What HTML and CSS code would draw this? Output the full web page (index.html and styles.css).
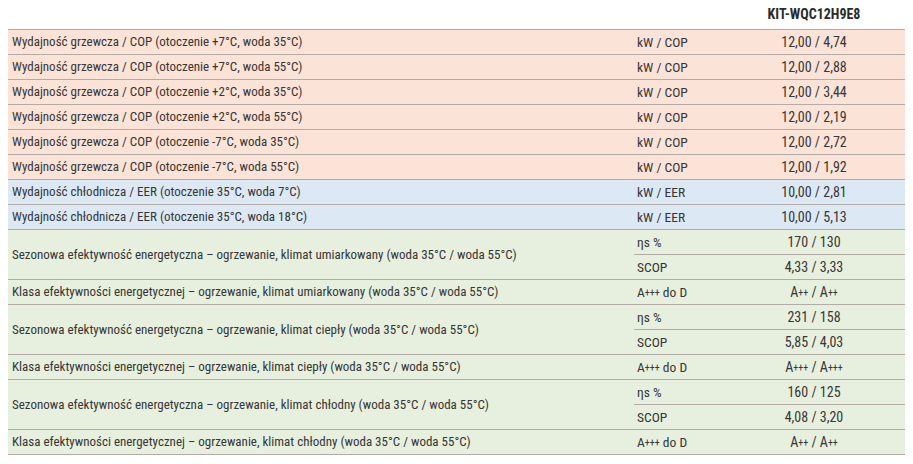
FILE: index.html
```html
<!DOCTYPE html>
<html lang="pl">
<head>
<meta charset="utf-8">
<title>KIT-WQC12H9E8</title>
<link rel="stylesheet" href="styles.css">
</head>
<body>
<table class="spec">
  <colgroup>
    <col class="c-desc">
    <col class="c-unit">
    <col class="c-val">
  </colgroup>
  <thead>
    <tr class="head">
      <th></th>
      <th></th>
      <th class="val">KIT-WQC12H9E8</th>
    </tr>
  </thead>
  <tbody>
    <tr class="heat"><td class="desc">Wydajność grzewcza / COP (otoczenie +7°C, woda 35°C)</td><td class="unit">kW / COP</td><td class="val">12,00 / 4,74</td></tr>
    <tr class="heat"><td class="desc">Wydajność grzewcza / COP (otoczenie +7°C, woda 55°C)</td><td class="unit">kW / COP</td><td class="val">12,00 / 2,88</td></tr>
    <tr class="heat"><td class="desc">Wydajność grzewcza / COP (otoczenie +2°C, woda 35°C)</td><td class="unit">kW / COP</td><td class="val">12,00 / 3,44</td></tr>
    <tr class="heat"><td class="desc">Wydajność grzewcza / COP (otoczenie +2°C, woda 55°C)</td><td class="unit">kW / COP</td><td class="val">12,00 / 2,19</td></tr>
    <tr class="heat"><td class="desc">Wydajność grzewcza / COP (otoczenie -7°C, woda 35°C)</td><td class="unit">kW / COP</td><td class="val">12,00 / 2,72</td></tr>
    <tr class="heat"><td class="desc">Wydajność grzewcza / COP (otoczenie -7°C, woda 55°C)</td><td class="unit">kW / COP</td><td class="val">12,00 / 1,92</td></tr>
    <tr class="cool"><td class="desc">Wydajność chłodnicza / EER (otoczenie 35°C, woda 7°C)</td><td class="unit">kW / EER</td><td class="val">10,00 / 2,81</td></tr>
    <tr class="cool"><td class="desc">Wydajność chłodnicza / EER (otoczenie 35°C, woda 18°C)</td><td class="unit">kW / EER</td><td class="val">10,00 / 5,13</td></tr>

    <tr class="seas top"><td class="desc" rowspan="2">Sezonowa efektywność energetyczna – ogrzewanie, klimat umiarkowany (woda 35°C / woda 55°C)</td><td class="unit">ηs %</td><td class="val">170 / 130</td></tr>
    <tr class="seas"><td class="unit">SCOP</td><td class="val">4,33 / 3,33</td></tr>
    <tr class="seas"><td class="desc">Klasa efektywności energetycznej – ogrzewanie, klimat umiarkowany (woda 35°C / woda 55°C)</td><td class="unit">A<span class="pl">+++</span> do D</td><td class="val">A<span class="pl">++</span> / A<span class="pl">++</span></td></tr>

    <tr class="seas top"><td class="desc" rowspan="2">Sezonowa efektywność energetyczna – ogrzewanie, klimat ciepły (woda 35°C / woda 55°C)</td><td class="unit">ηs %</td><td class="val">231 / 158</td></tr>
    <tr class="seas"><td class="unit">SCOP</td><td class="val">5,85 / 4,03</td></tr>
    <tr class="seas"><td class="desc">Klasa efektywności energetycznej – ogrzewanie, klimat ciepły (woda 35°C / woda 55°C)</td><td class="unit">A<span class="pl">+++</span> do D</td><td class="val">A<span class="pl">+++</span> / A<span class="pl">+++</span></td></tr>

    <tr class="seas top"><td class="desc" rowspan="2">Sezonowa efektywność energetyczna – ogrzewanie, klimat chłodny (woda 35°C / woda 55°C)</td><td class="unit">ηs %</td><td class="val">160 / 125</td></tr>
    <tr class="seas"><td class="unit">SCOP</td><td class="val">4,08 / 3,20</td></tr>
    <tr class="seas"><td class="desc">Klasa efektywności energetycznej – ogrzewanie, klimat chłodny (woda 35°C / woda 55°C)</td><td class="unit">A<span class="pl">+++</span> do D</td><td class="val">A<span class="pl">++</span> / A<span class="pl">++</span></td></tr>
  </tbody>
</table>
</body>
</html>
```

FILE: styles.css
```css
html, body {
  margin: 0;
  background: #ffffff;
}
body {
  padding: 8px;
  font-family: "Roboto Condensed", "DejaVu Sans Condensed", sans-serif;
  font-stretch: condensed;
  font-size: 13px;
  color: #363636;
}
.spec {
  width: 897px;
  border-collapse: collapse;
  table-layout: fixed;
}
.c-desc { width: 626px; }
.c-unit { width: 101px; }
.c-val { width: 170px; }

.head th {
  height: 21px;
  padding: 0;
  font-weight: bold;
  font-size: 14px;
  vertical-align: top;
  line-height: 12px;
  color: #2b2b2b;
}
.head th.val {
  text-align: center;
  padding-right: 12px;
}

td {
  height: 24px;
  padding: 0;
  border-top: 1px solid #b3aba6;
  border-bottom: 1px solid #b3aba6;
  line-height: 16px;
  white-space: nowrap;
}
td.desc {
  padding-left: 4px;
}
td.unit {
  padding-left: 3px;
  font-size: 13.5px;
}
td.val {
  text-align: center;
  padding-right: 12px;
  font-size: 14px;
}
.heat td { background: #fce3d7; }
.cool td { background: #dce9f4; }
.seas td { background: #e7f0de; }
.seas td.desc[rowspan] { vertical-align: middle; }

.pl {
  font-size: 10px;
  vertical-align: 1px;
}
```
